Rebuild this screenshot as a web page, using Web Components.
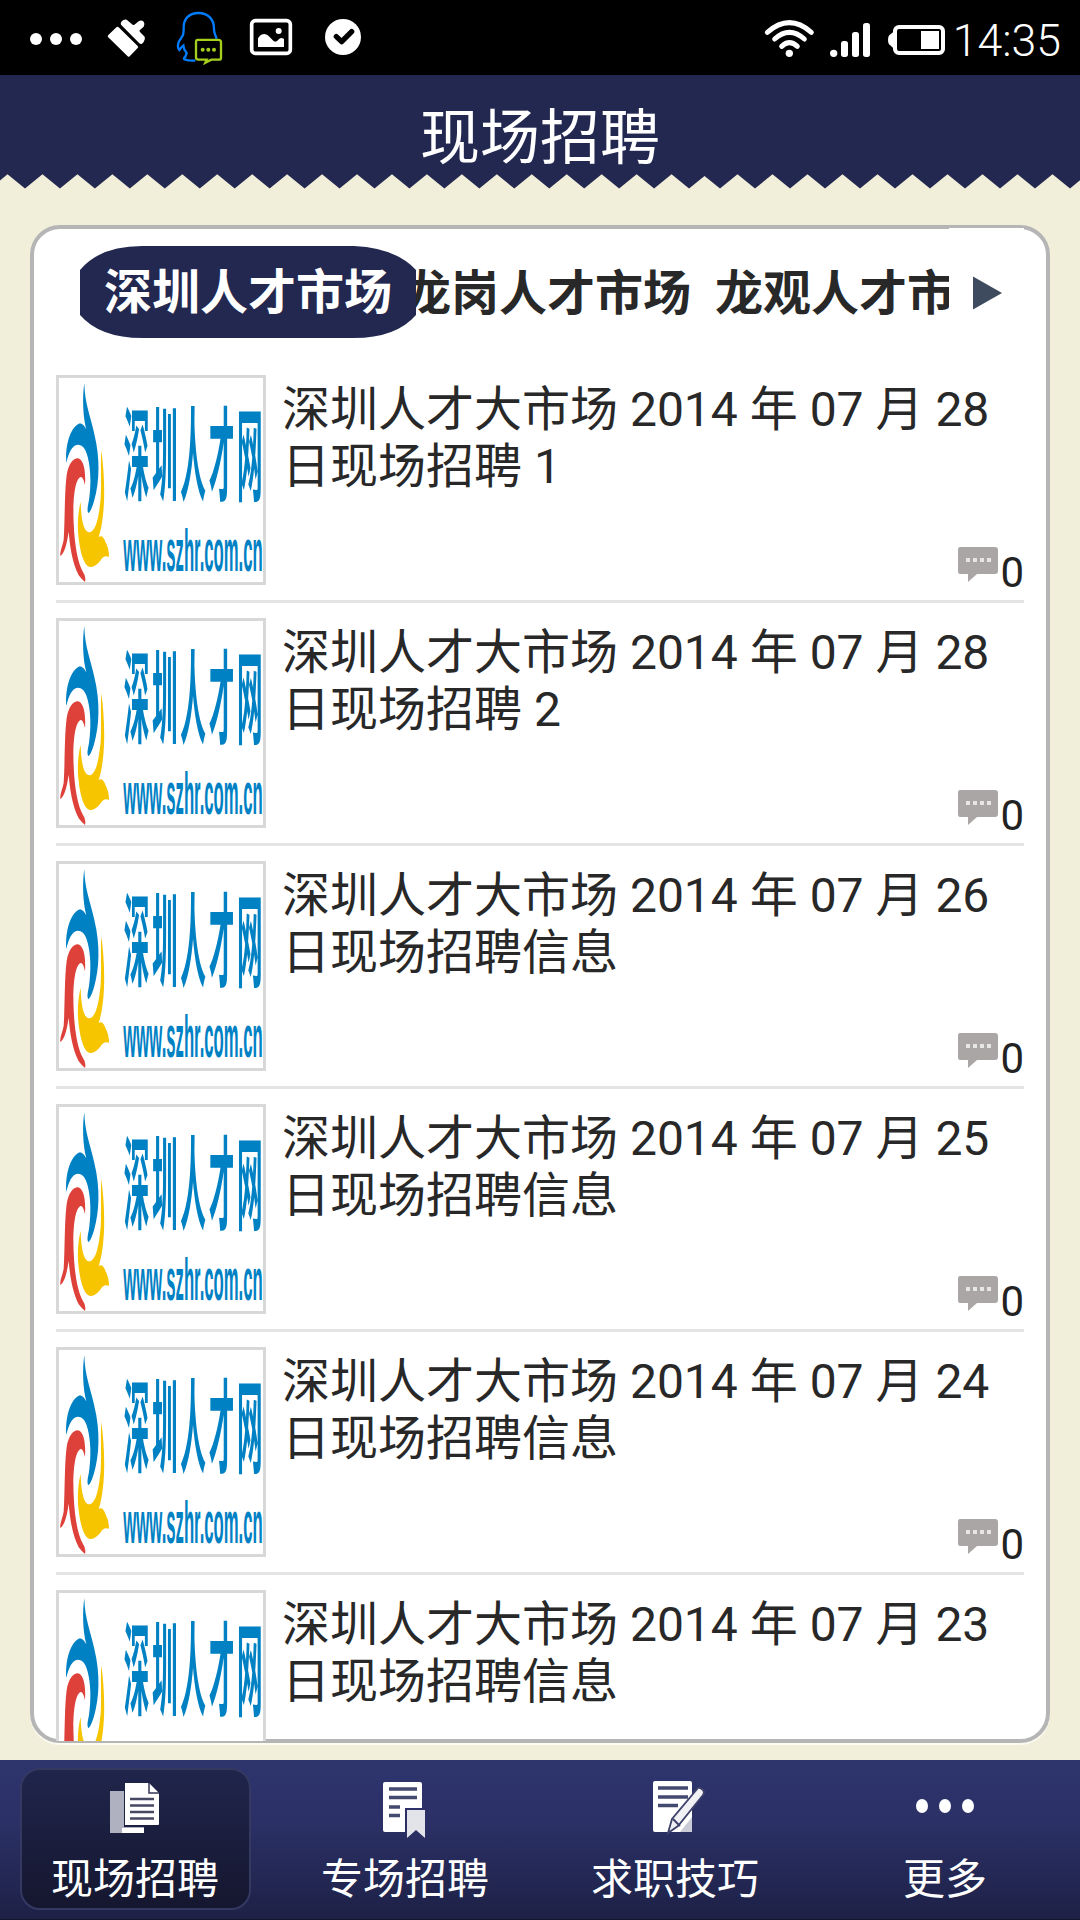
<!DOCTYPE html>
<html lang="zh-CN">
<head>
<meta charset="utf-8">
<title>现场招聘</title>
<style>
body{margin:0;background:#f1eeda;font-family:Roboto,"Noto Sans CJK SC",sans-serif}
</style>
</head>
<body>
<job-app></job-app>
<script>
function define(name, css, html, setup){
  const t=document.createElement('template');
  t.innerHTML='<style>*{box-sizing:border-box}svg{display:block;flex:none}'+css+'</style>'+html;
  customElements.define(name,class extends HTMLElement{
    connectedCallback(){
      if(this.shadowRoot)return;
      const r=this.attachShadow({mode:'open'});
      r.append(t.content.cloneNode(true));
      if(setup)setup(this,r);
    }
  });
}

define('status-bar',`
:host{display:flex;justify-content:space-between;height:75px;background:#000;color:#fff}
`,`
<svg width="400" height="75" viewBox="0 0 1200 225" fill="#fff">
 <circle cx="108" cy="117" r="18"/><circle cx="168" cy="117" r="18"/><circle cx="228" cy="117" r="18"/>
 <path d="M324 111Q322 108 325 105L350 81Q353 79 356 82L413 138Q416 141 413 144L389 169Q386 172 383 169Z"/>
 <path d="M363 74Q361 70 364 65Q371 57 380 59L398 74Q402 76 405 73L416 64Q424 58 431 65Q436 72 431 80L419 91Q418 94 420 96L434 110Q437 118 431 126L426 131Q422 134 418 130Z"/>
 <path d="M586 181Q570 184 553 178Q550 174 556 170L560 159Q551 149 550 137Q544 142 538 150Q531 143 536 126L549 105Q551 96 551 88C549 56 568 39 595 39C624 39 643 58 642 88Q642 98 650 116" fill="none" stroke="#007cff" stroke-width="7"/>
 <path d="M593 119.500H655Q663 119.500 663 127V173Q663 179 656 179H634L616 188L620 179H596Q588 179 588 172V126Q588 119.500 593 119.500Z" fill="#000" stroke="#a6ce1c" stroke-width="7"/>
 <g fill="#a6ce1c"><circle cx="608" cy="149" r="6"/><circle cx="625" cy="149" r="6"/><circle cx="642" cy="149" r="6"/></g>
 <rect x="755" y="62" width="116" height="98" rx="11" fill="none" stroke="#fff" stroke-width="11"/>
 <circle cx="836" cy="93" r="9"/>
 <path d="M774 141V115Q781 102 794 102Q803 103 809 111L820 122Q826 127 832 122L838 116Q844 111 852 117V141Z"/>
 <circle cx="1029" cy="111" r="54"/>
 <path d="M1009 110L1025 125L1055 95" fill="none" stroke="#000" stroke-width="16" stroke-linecap="round" stroke-linejoin="round"/>
</svg>
<svg width="340" height="75" viewBox="0 0 1020 225" fill="#fff">
 <g fill="none" stroke="#fff" stroke-width="15" stroke-linecap="round">
 <path d="M82 97Q148 39 214 97"/><path d="M104 117Q148 77 193 117"/><path d="M125 139Q148 117 172 139"/></g>
 <circle cx="148" cy="160" r="11"/>
 <circle cx="281" cy="160" r="11"/><rect x="303" y="123" width="21" height="48" rx="8"/><rect x="336" y="96" width="21" height="75" rx="8"/><rect x="369" y="69" width="21" height="102" rx="8"/>
 <rect x="465" y="81" width="144" height="78" rx="12" fill="none" stroke="#fff" stroke-width="12"/>
 <path d="M462 97Q455 97 453 102Q444 105 444 120Q444 134 453 137Q455 143 462 143Z"/><rect x="543" y="93" width="54" height="54"/>
 <text x="638" y="167" font-size="133" font-weight="300" textLength="325" lengthAdjust="spacingAndGlyphs">14:35</text>
</svg>`);

define('title-bar',`
:host{display:block;color:#fff}
h1{margin:0;height:98px;background:#232850;font-size:60px;font-weight:400;line-height:60px;padding-top:34px;text-align:center}
`,`<h1><slot></slot></h1>
<svg width="1080" height="18" viewBox="0 0 1080 18"><path fill="#232850"/></svg>`,(h,r)=>{
  // the strip is made of two tiles that meet at x = 705
  const tips=[];
  for(let k=-1;k<20;k++)tips.push(25+34.95*k);
  for(let k=0;k<12;k++)tips.push(720+35*k);
  let d='M-20 0';
  tips.forEach((x,i)=>{
    const n=tips[i+1]||x+35;
    d+='L'+x+' 15.600L'+((x+n)/2)+' '+(n-x<33?3:1.2);
  });
  r.querySelector('path').setAttribute('d',d+'V0Z');
});

define('market-tabs',`
:host{display:flex;align-items:flex-start;height:142px;position:relative;padding-left:46px;font-size:48px;font-weight:600;color:#282828;line-height:60px}
.strip{display:flex;gap:24px;width:869px;height:142px;padding:35px 0 0 323px;overflow:hidden;white-space:nowrap}
.strip span{flex:none}
.pill{position:absolute;z-index:1;left:46px;top:17px;width:336px;height:92px;color:#fff;line-height:60px;padding-top:17px;text-align:center}
.pill svg{position:absolute;left:0;top:0;z-index:-1}
.more{display:flex;width:75px;height:140px;margin-top:-1px;background:#fff;padding:48px 0 0 24px}
`,`<div class="strip"><span>龙岗人才市场</span><span>龙观人才市场</span></div>
<div class="more"><svg width="29" height="34" viewBox="0 0 29 34"><path d="M0 .5L29 17L0 33.500Z" fill="#3e4b5e"/></svg></div>
<div class="pill"><svg width="336" height="92" viewBox="0 0 336 92"><path d="M0 24Q20 0 62 0H274Q316 2 336 24V69Q316 92 274 92H62Q20 92 0 69Z" fill="#232850"/></svg>深圳人才市场</div>`);

define('szhr-logo',`
:host{display:block;flex:none;width:210px;height:210px;border:3px solid #d8d8d8;background:#fff}
svg{overflow:visible}
`,`<svg width="204" height="204" viewBox="57 54 612 612">
 <path fill="#0081c4" d="M133 70C134 130 152 170 163 222C182 300 177 370 163 420C157 442 150 458 145 459C140 452 144 436 147 420C154 370 152 325 143 290C137 266 128 254 113 254C97 256 86 276 79 309C75 260 90 200 120 190C128 191 134 200 139 208C128 170 127 105 133 70Z"/>
 <path fill="#de403a" d="M61 588C59 575 67 560 71 540C75 480 73 400 80 345C86 310 100 295 113 295C130 297 138 330 135 375C131 358 127 350 122 351C103 358 98 430 101 490C104 560 114 610 129 636Q139 650 135 666Q125 658 116 646C96 605 90 560 86 515C81 550 74 580 61 588Z"/>
 <path fill="#f7c400" d="M184 270C192 330 196 405 189 465Q185 505 176 531Q188 522 196 545Q207 565 207 590Q190 584 181 602Q165 621 151 621C133 620 121 580 116 535C111 500 114 455 122 425C123 465 128 517 149 517C168 514 177 470 182 415C185 360 181 320 184 270Z"/>
 <g fill="#0081c4" font-weight="700">
 <text transform="translate(251 400) scale(.25 1)" font-size="308" font-family="Noto Sans CJK SC" letter-spacing="32">深圳人才网</text>
 <text x="250" y="632" font-size="175" font-family="Liberation Sans" textLength="418" lengthAdjust="spacingAndGlyphs">www.szhr.com.cn</text></g>
</svg>`);

define('job-item',`
:host{display:block;flex:none;height:243px;width:968px;padding-top:15px}
.body{display:flex;flex-direction:column;justify-content:space-between;width:742px;height:213px}
.t{font-size:48px;line-height:57px;color:#282828;padding-top:6px;white-space:pre}
.c{display:flex;justify-content:flex-end;gap:1px;font-size:42px;line-height:42px;color:#222}
.c span{padding-top:6px;height:40px}
.wrap{display:flex;gap:16px;height:228px;border-bottom:3px solid #e4e4e4}
`,`<div class="wrap"><szhr-logo></szhr-logo><div class="body"><div class="t"><slot></slot></div>
<div class="c"><svg width="42" height="42" viewBox="0 0 42 42"><path d="M3 1H38Q41 1 41 4V25Q41 28 38 28H20L11 36V28H3Q1 28 1 25V4Q1 1 3 1Z" fill="#aaa6a5"/><path d="M9 12h4v4h-4zM16 12h4v4h-4zM23 12h4v4h-4zM30 12h4v4h-4z" fill="#e6e6e6"/></svg><span>0</span></div></div></div>`);

define('job-card',`
:host{display:block;width:1020px;height:1518px;margin:34px auto 0 30px;border:4px solid #b5b5b5;border-radius:30px;background:#fff;box-shadow:0 2px 0 #fbfaf3}
.list{display:flex;flex-direction:column;width:968px;margin-left:22px;margin-top:-11px;height:1381px;overflow:hidden}
`,`<market-tabs></market-tabs><div class="list"><slot></slot></div>`);

const icons={
 pages:`<svg width="70" height="70" viewBox="100 1780 70 70"><path d="M110 1795h14v36h20v6h-34z" fill="#b0b1c0"/><path d="M122 1832h22v5h-22z" fill="#fff"/><path d="M125 1787h24l10 10v31q0 1-1 1h-33z" fill="#fff"/><path d="M149 1787v10h10" stroke="#333656" stroke-width="1.500" fill="none"/><path d="M130 1803h24M130 1809.500h24M130 1816h24M130 1822.500h24" stroke="#464864" stroke-width="2.600"/></svg>`,
 mark:`<svg width="70" height="70" viewBox="370 1780 70 70"><path d="M385 1786h35q2 0 2 2v24h-17v24h-20q-2 0-2-2v-46q0-2 2-2z" fill="#fff"/><path d="M389 1793h28M389 1801.500h28M389 1811h11M389 1819.500h11" stroke="#444970" stroke-width="3.600"/><path d="M407 1814h18v28l-9-8l-9 8z" fill="#e3e4ea"/></svg>`,
 pen:`<svg width="70" height="70" viewBox="640 1780 70 70"><path d="M655 1785h35q2 0 2 2v47q0 2-2 2h-35q-2 0-2-2v-47q0-2 2-2z" fill="#fff"/><path d="M658 1792h30M658 1801h30M658 1809.500h20" stroke="#444970" stroke-width="3.600"/><path d="M680 1836l12-15v15z" fill="#c9cbd7"/><path d="M668 1837l4-14l26-31q2-1 5 2q2 2 0 5l-25 31z" fill="#f0f0f5" stroke="#3e426b" stroke-width="1.800"/><path d="M673 1823l7 7" stroke="#3e426b" stroke-width="2"/></svg>`,
 more:`<svg width="70" height="70" viewBox="910 1780 70 70" fill="#fff"><ellipse cx="922" cy="1810" rx="6" ry="7"/><ellipse cx="945" cy="1810" rx="6" ry="7"/><ellipse cx="968" cy="1810" rx="6" ry="7"/></svg>`
};
define('nav-item',`
:host{display:flex;flex:1;justify-content:center;padding-top:8px;color:#fff}
.b{display:flex;flex-direction:column;align-items:center;width:231px;height:142px;padding-top:7px;border:1px solid transparent;border-radius:20px}
:host([active]) .b{background:linear-gradient(#20254c,#15172f);background-origin:border-box;border:2px solid #343962;padding-top:6px}
.l{font-size:42px;line-height:50px;margin-top:9px}
`,`<div class="b"><div class="i"></div><div class="l"><slot></slot></div></div>`,(h,r)=>{
  r.querySelector('.i').innerHTML=icons[h.getAttribute('icon')];
});
define('nav-bar',`
:host{display:flex;box-sizing:border-box;height:160px;margin-top:17px;background:linear-gradient(#2e356d,#2b3066 40%,#1d2146);border-bottom:1px solid #14162c}
`,`<slot></slot>`);

define('job-app',`
:host{display:flex;flex-direction:column;width:1080px;height:1920px;overflow:hidden;background:#f1eeda}
job-card{box-sizing:border-box;flex:none}
`,`<status-bar></status-bar><title-bar>现场招聘</title-bar>
<job-card>
<job-item>深圳人才大市场 2014 年 07 月 28<br>日现场招聘 1</job-item>
<job-item>深圳人才大市场 2014 年 07 月 28<br>日现场招聘 2</job-item>
<job-item>深圳人才大市场 2014 年 07 月 26<br>日现场招聘信息</job-item>
<job-item>深圳人才大市场 2014 年 07 月 25<br>日现场招聘信息</job-item>
<job-item>深圳人才大市场 2014 年 07 月 24<br>日现场招聘信息</job-item>
<job-item>深圳人才大市场 2014 年 07 月 23<br>日现场招聘信息</job-item>
</job-card>
<nav-bar><nav-item icon="pages" active>现场招聘</nav-item><nav-item icon="mark">专场招聘</nav-item><nav-item icon="pen">求职技巧</nav-item><nav-item icon="more">更多</nav-item></nav-bar>`);
</script>
</body>
</html>
